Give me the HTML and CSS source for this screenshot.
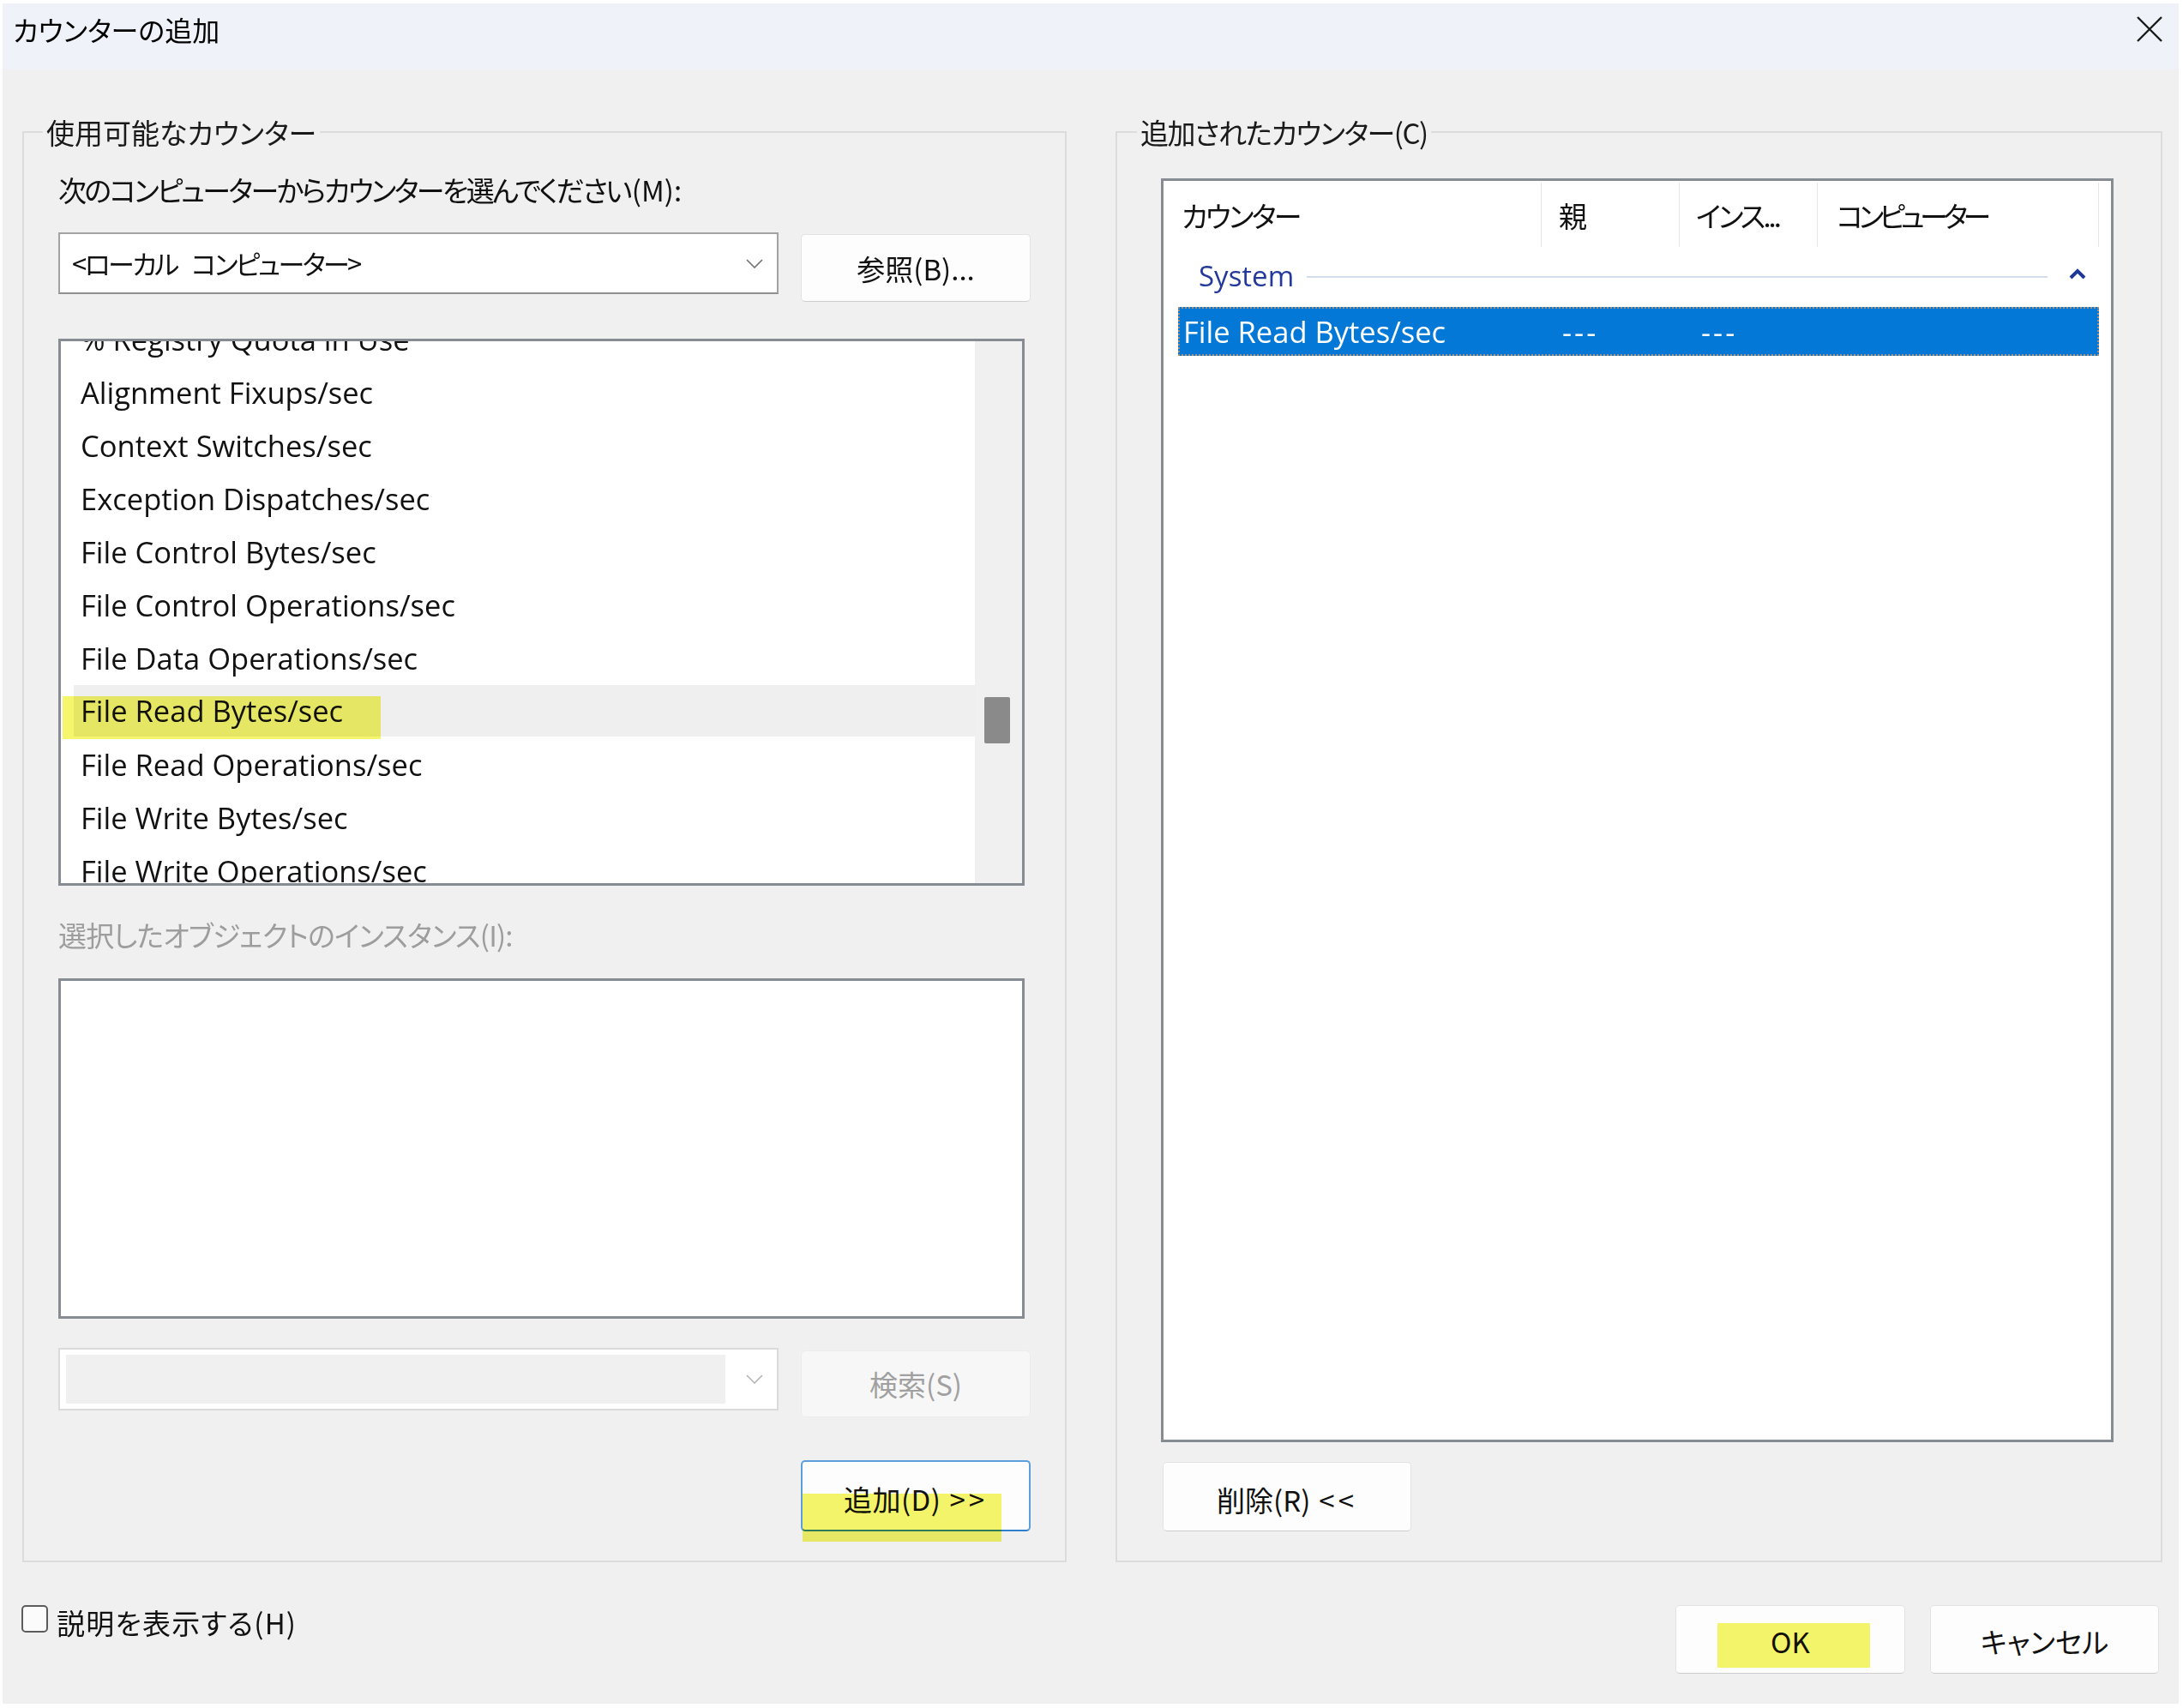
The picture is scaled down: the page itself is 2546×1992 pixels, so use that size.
FILE: index.html
```html
<!DOCTYPE html>
<html lang="ja">
<head>
<meta charset="utf-8">
<title>カウンターの追加</title>
<link rel="stylesheet" href="styles.css">
</head>
<body>
<div class="window">
  <div class="titlebar">
    <div class="title">カウンターの追加</div>
    <svg class="close" viewBox="0 0 32 32" aria-hidden="true"><path d="M2 2 L30 30 M30 2 L2 30"/></svg>
  </div>

  <div class="main">
    <fieldset class="group group-left">
      <legend>使用可能なカウンター</legend>
      <div class="group-body body-left">
        <div class="label label-computer">次のコンピューターからカウンターを選んでください<span class="latin">(M):</span></div>
        <div class="row row-computer">
          <div class="combo">
            <span class="combo-text">&lt;ローカル コンピューター&gt;</span>
            <svg class="chev" viewBox="0 0 20 11" aria-hidden="true"><polyline points="1,1 10,10 19,1"/></svg>
          </div>
          <div class="btn btn-browse">参照(B)...</div>
        </div>

        <div class="listbox counters">
          <div class="rows-view">
            <div class="rows">
              <div class="item">% Registry Quota in Use</div>
              <div class="item">Alignment Fixups/sec</div>
              <div class="item">Context Switches/sec</div>
              <div class="item">Exception Dispatches/sec</div>
              <div class="item">File Control Bytes/sec</div>
              <div class="item">File Control Operations/sec</div>
              <div class="item">File Data Operations/sec</div>
              <div class="item sel">File Read Bytes/sec<span class="marker marker-item"></span></div>
              <div class="item">File Read Operations/sec</div>
              <div class="item">File Write Bytes/sec</div>
              <div class="item">File Write Operations/sec</div>
            </div>
          </div>
          <div class="scrollbar"><div class="thumb"></div></div>
        </div>

        <div class="label label-disabled">選択したオブジェクトのインスタンス(I):</div>
        <div class="listbox instances"></div>

        <div class="row row-search">
          <div class="combo combo-disabled">
            <div class="combo-field"></div>
            <svg class="chev chev-disabled" viewBox="0 0 20 11" aria-hidden="true"><polyline points="1,1 10,10 19,1"/></svg>
          </div>
          <div class="btn btn-disabled">検索(S)</div>
        </div>

        <div class="row row-add">
          <div class="btn btn-add">追加(D) <span class="arrows">&gt;&gt;</span><span class="marker marker-add"></span></div>
        </div>
      </div>
    </fieldset>

    <fieldset class="group group-right">
      <legend>追加されたカウンター(C)</legend>
      <div class="group-body body-right">
        <div class="listview">
          <div class="lv-header">
            <div class="lv-col">カウンター</div>
            <div class="lv-col">親</div>
            <div class="lv-col">インス...</div>
            <div class="lv-col">コンピューター</div>
          </div>
          <div class="lv-group">
            <span class="lv-group-name">System</span>
            <span class="lv-group-line"></span>
            <svg class="lv-group-chev" viewBox="0 0 20 13" aria-hidden="true"><polyline points="2,11 10,3 18,11"/></svg>
          </div>
          <div class="lv-row sel">
            <div class="lv-cell">File Read Bytes/sec</div>
            <div class="lv-cell dash">---</div>
            <div class="lv-cell dash">---</div>
            <div class="lv-cell"></div>
          </div>
        </div>
        <div class="btn btn-delete">削除(R) <span class="arrows">&lt;&lt;</span></div>
      </div>
    </fieldset>
  </div>

  <div class="footer">
    <label class="check">
      <span class="checkbox"></span>
      <span class="check-label">説明を表示する(H)</span>
    </label>
    <div class="footer-buttons">
      <div class="btn btn-ok">OK<span class="marker marker-ok"></span></div>
      <div class="btn btn-cancel">キャンセル</div>
    </div>
  </div>
</div>
</body>
</html>
```

FILE: styles.css
```css
* { box-sizing: border-box; }

html, body {
  margin: 0;
  padding: 0;
  background: #ffffff;
}

body {
  width: 2546px;
  height: 1992px;
  overflow: hidden;
  font-family: "Noto Sans CJK JP", "Noto Sans", sans-serif;
  font-feature-settings: "palt";
  color: #111111;
}

.window {
  margin: 4px 0 0 3px;
  width: 2538px;
  height: 1983px;
  background: #f0f0f0;
  display: flex;
  flex-direction: column;
}

/* title bar */
.titlebar {
  height: 77px;
  flex: none;
  background: #eff3f9;
  display: flex;
  justify-content: space-between;
  align-items: flex-start;
  padding: 10px 18px 0 12px;
}

.title {
  font-size: 32px;
  line-height: 40px;
  color: #000;
}

.close {
  width: 32px;
  height: 32px;
  margin-top: 4px;
  fill: none;
  stroke: #1a1a1a;
  stroke-width: 2.4;
}

/* main groups */
.main {
  display: flex;
  gap: 57px;
  padding-left: 23px;
  margin-top: 53px;
}

.group {
  margin: 0;
  padding: 0;
  min-width: 0;
  height: 1688px;
  border: 2px solid #dcdcdc;
}

.group legend {
  font-size: 33px;
  line-height: 40px;
  padding: 0 4px;
  color: #1a1a1a;
}

.group-left { width: 1218px; }
.group-left legend { margin-left: 22px; }

.group-right { width: 1221px; }
.group-right legend { margin-left: 23px; letter-spacing: -1.5px; }

.body-left {
  padding: 0 40px;
  display: flex;
  flex-direction: column;
}

.label {
  font-size: 33px;
  line-height: 40px;
  white-space: nowrap;
}

.label-computer {
  margin-top: 27px;
  letter-spacing: -2.6px;
}

.label-computer .latin {
  letter-spacing: 0;
  margin-left: 2px;
}

.label-disabled {
  margin-top: 37px;
  color: #9d9d9d;
  letter-spacing: -0.8px;
}

.row {
  display: flex;
  gap: 26px;
  align-items: flex-start;
}

.row-computer { margin-top: 30px; }
.row-search { margin-top: 34px; }
.row-add { margin-top: 50px; justify-content: flex-end; }

/* combo boxes */
.combo {
  width: 840px;
  height: 72px;
  background: #ffffff;
  border: 2px solid #a3a3a3;
  border-bottom-color: #8f8f8f;
  display: flex;
  align-items: center;
  padding: 0 16px 0 14px;
}

.combo-text {
  flex: 1;
  font-size: 31px;
  line-height: 40px;
  letter-spacing: -2.6px;
  word-spacing: 12px;
  white-space: pre;
}

.chev {
  width: 20px;
  height: 11px;
  fill: none;
  stroke: #707070;
  stroke-width: 1.6;
  flex: none;
}

.combo-disabled {
  height: 73px;
  border-color: #dadada;
  padding: 6px 16px 6px 7px;
  align-items: stretch;
}

.combo-field {
  flex: 1;
  margin-right: 24px;
  background: #f0f0f0;
}

.chev-disabled {
  align-self: center;
  stroke: #b4b4b4;
}

/* buttons */
.btn {
  position: relative;
  display: flex;
  align-items: center;
  justify-content: center;
  background: #fdfdfd;
  border: 1px solid #e3e3e3;
  border-bottom-color: #cdcdcd;
  border-radius: 5px;
  font-size: 33px;
  line-height: 40px;
  color: #111;
  white-space: nowrap;
}

.arrows {
  letter-spacing: 4px;
  margin-left: 10px;
}

.btn-browse {
  width: 268px;
  height: 79px;
  margin-top: 2px;
}

.btn-disabled {
  width: 268px;
  height: 78px;
  margin-top: 3px;
  background: #f7f7f7;
  border-color: #ececec;
  color: #a0a0a0;
}

.btn-add {
  width: 268px;
  height: 83px;
  border: 2px solid #5a9fdf;
  border-bottom-color: #2f7fcf;
  padding-top: 6px;
  letter-spacing: 0.5px;
}

.btn-delete {
  width: 290px;
  height: 81px;
  margin-top: 23px;
  margin-left: 53px;
  padding-top: 6px;
}

/* list boxes */
.listbox {
  width: 1127px;
  background: #ffffff;
  border: 3px solid #878b92;
}

.counters {
  margin-top: 43px;
  height: 638px;
  display: flex;
}

.rows-view {
  flex: 1;
  overflow: hidden;
}

.rows {
  margin-top: -33px;
}

.item {
  height: 62px;
  line-height: 62px;
  padding-left: 23px;
  font-family: "Open Sans", "Noto Sans", sans-serif;
  font-feature-settings: normal;
  font-size: 34.5px;
  color: #111;
  white-space: nowrap;
}

.item.sel {
  position: relative;
  height: 60px;
  margin-bottom: 2px;
  line-height: 60px;
  margin-left: 15px;
  padding-left: 8px;
  background: #efefef;
}

.scrollbar {
  width: 55px;
  flex: none;
  background: #f0f0f0;
  padding: 415px 0 0 11px;
}

.thumb {
  width: 30px;
  height: 54px;
  background: #8a8a8a;
  border-radius: 2px;
}

.instances {
  margin-top: 31px;
  height: 397px;
}

/* highlighter marks */
.marker {
  position: absolute;
  background: #f6f66c;
  mix-blend-mode: multiply;
  pointer-events: none;
}

.marker-item {
  left: -13px;
  top: 13px;
  width: 371px;
  height: 50px;
}

.marker-add {
  left: 0;
  top: 37px;
  width: 232px;
  height: 56px;
}

.marker-ok {
  left: 48px;
  top: 20px;
  width: 178px;
  height: 52px;
}

/* right group */
.body-right {
  display: flex;
  flex-direction: column;
}

.listview {
  margin-top: 34px;
  margin-left: 51px;
  width: 1111px;
  height: 1474px;
  background: #ffffff;
  border: 3px solid #878b92;
}

.lv-header {
  display: grid;
  grid-template-columns: 441px 161px 161px 328px;
  height: 80px;
}

.lv-col {
  margin-top: 2px;
  height: 75px;
  border-right: 1px solid #e5e5e5;
  display: flex;
  align-items: center;
  padding-left: 21px;
  font-size: 33px;
  line-height: 40px;
  letter-spacing: -2.6px;
  white-space: nowrap;
}

.lv-col:nth-child(2) { padding-left: 20px; letter-spacing: 0; }
.lv-col:nth-child(3) { padding-left: 19px; letter-spacing: -3px; }
.lv-col:nth-child(4) { padding-left: 22px; letter-spacing: -5.5px; }

.lv-group {
  height: 62px;
  display: flex;
  align-items: center;
  padding: 0 29px 0 41px;
}

.lv-group-name {
  font-family: "Open Sans", "Noto Sans", sans-serif;
  font-feature-settings: normal;
  font-size: 33px;
  line-height: 40px;
  color: #24399b;
}

.lv-group-line {
  flex: 1;
  height: 2px;
  margin: 2px 25px 0 15px;
  background: #d5dcee;
}

.lv-group-chev {
  width: 20px;
  height: 13px;
  fill: none;
  stroke: #1d3896;
  stroke-width: 4;
  margin-top: -6px;
}

.lv-row {
  margin-top: 5px;
  margin-left: 17px;
  width: 1074px;
  height: 57px;
  display: grid;
  grid-template-columns: 424px 161px 161px 1fr;
  align-items: center;
}

.lv-row.sel {
  background: #0378d6;
  border: 2px dotted #a98f7a;
  color: #ffffff;
}

.lv-cell {
  font-family: "Open Sans", "Noto Sans", sans-serif;
  font-feature-settings: normal;
  font-size: 34.5px;
  line-height: 40px;
  padding-left: 4px;
  white-space: nowrap;
}

.lv-cell.dash {
  padding-left: 22px;
  letter-spacing: 3px;
}

.lv-cell.dash + .lv-cell.dash { padding-left: 23px; }

/* footer */
.footer {
  margin-top: 50px;
  display: flex;
  align-items: flex-start;
  padding: 0 23px 0 22px;
}

.check {
  display: flex;
  align-items: flex-start;
}

.checkbox {
  width: 31px;
  height: 32px;
  border: 2px solid #5c5c5c;
  border-radius: 5px;
  background: #fbfbfb;
}

.check-label {
  margin-left: 10px;
  font-size: 33px;
  line-height: 40px;
  letter-spacing: 1.2px;
}

.footer-buttons {
  margin-left: auto;
  display: flex;
  gap: 29px;
}

.btn-ok {
  width: 268px;
  height: 80px;
  padding-top: 4px;
}

.btn-cancel {
  width: 267px;
  height: 80px;
  padding-top: 4px;
}
```
